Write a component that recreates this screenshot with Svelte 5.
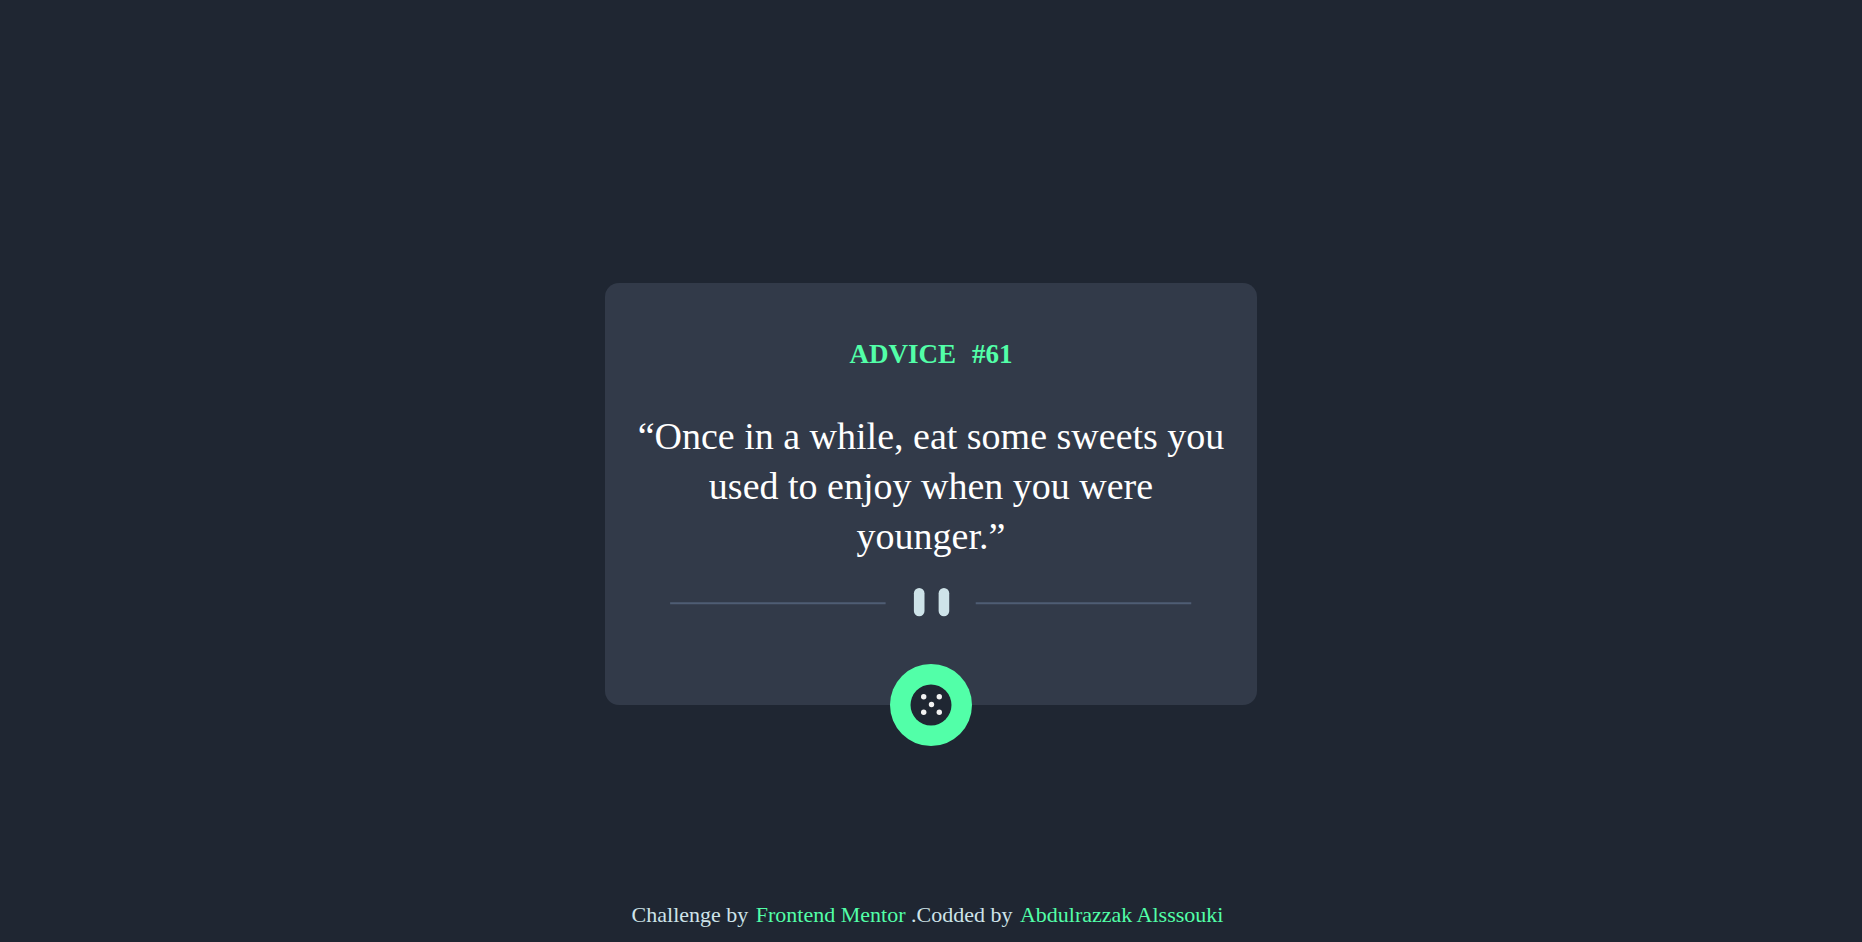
<script>
  const advices = [
    { id: 61, text: 'Once in a while, eat some sweets you used to enjoy when you were younger.' }
  ];
  let index = $state(0);
  const current = $derived(advices[index]);

  function next() {
    index = (index + 1) % advices.length;
  }
</script>

<div class="page">
  <main class="card">
    <h1><span>ADVICE</span><span>#{current.id}</span></h1>
    <p class="quote">“{current.text}”</p>
    <svg class="divider" viewBox="0 0 295 16" aria-hidden="true">
      <path fill="#4f5d74" d="M0 8h122v1.2H0zM173 8h122v1.2H173z" />
      <g fill="#cee3e9">
        <rect x="138" width="6" height="16" rx="3" />
        <rect x="152" width="6" height="16" rx="3" />
      </g>
    </svg>
    <button type="button" aria-label="New advice" onclick={next}>
      <svg viewBox="0 0 42 42" aria-hidden="true">
        <circle cx="21" cy="21" r="20.5" fill="#1f2632" />
        <g fill="#f2f2f2">
          <circle cx="13.7" cy="12.8" r="2.7" />
          <circle cx="29.3" cy="12.8" r="2.7" />
          <circle cx="21.5" cy="20.5" r="2.7" />
          <circle cx="13.7" cy="28.3" r="2.7" />
          <circle cx="29.3" cy="28.3" r="2.7" />
        </g>
      </svg>
    </button>
  </main>

  <footer>
    Challenge by <a href="#frontend-mentor">Frontend Mentor</a> .Codded by
    <a href="#author">Abdulrazzak Alsssouki</a>
  </footer>
</div>

<style>
  :global(body) {
    margin: 0;
    background: #1f2632;
  }

  .page {
    box-sizing: border-box;
    min-height: 100vh;
    display: grid;
    grid-template-rows: 1fr auto 1fr;
    justify-items: center;
    padding: 46px 0 0;
    font-family: 'Liberation Serif', 'Times New Roman', serif;
  }

  .card {
    grid-row: 2;
    box-sizing: border-box;
    width: 35%;
    min-width: 320px;
    display: flex;
    flex-direction: column;
    align-items: center;
    padding: 54px 28px 0;
    border-radius: 14px;
    background: #323a49;
    text-align: center;
  }

  h1 {
    display: flex;
    gap: 16px;
    margin: 0;
    font-size: 27px;
    line-height: 34px;
    color: #52ffa8;
  }

  .quote {
    margin: 40px 0 27px;
    font-size: 38px;
    line-height: 50px;
    color: #fff;
  }

  .divider {
    display: block;
    width: 28vw;
    min-width: 240px;
  }

  button {
    display: grid;
    place-items: center;
    width: 82px;
    height: 82px;
    margin: 47px 0 -41px;
    padding: 0;
    border: 0;
    border-radius: 50%;
    background: #52ffa8;
    cursor: pointer;
  }

  button svg {
    width: 42px;
    height: 42px;
  }

  footer {
    grid-row: 3;
    align-self: end;
    padding: 0 7px 14px 0;
    font-size: 22px;
    line-height: 26px;
    color: #cee3e9;
  }

  a {
    margin-left: 2px;
    color: #52ffa8;
    text-decoration: none;
  }
</style>
